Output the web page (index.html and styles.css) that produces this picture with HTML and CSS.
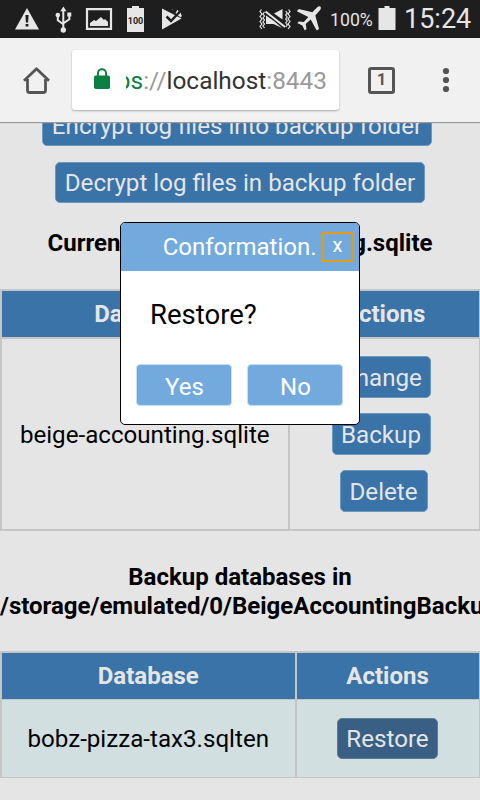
FILE: index.html
```html
<!DOCTYPE html>
<html lang="en">
<head>
<meta charset="utf-8">
<title>Database backup</title>
<link rel="stylesheet" href="styles.css">
</head>
<body>
<div class="phone">
  <div class="status">
    <svg class="status-left" width="200" height="38" viewBox="0 0 200 38" fill="#e6e6e6">
      <path d="M27 8 39 29.500H15z"/><path d="M25.400 15h3.200l-.5 7.500h-2.200zM25.600 24h2.800v2.600h-2.800z" fill="#1e1e1e"/>
      <path d="M63.400 6.500 60.300 11.300h6.200z"/><circle cx="63.300" cy="30" r="2.700"/><circle cx="57.800" cy="15" r="2.300"/><path d="M67.300 12.500h4v4h-4z"/>
      <path d="M63.300 9v20M57.800 15v5.200l5.500 4M69.300 15v4.300l-6 4" fill="none" stroke="#e6e6e6" stroke-width="2"/>
      <path d="M87 9.200h24v19.600H87z" fill="none" stroke="#e6e6e6" stroke-width="2.200"/><path d="M90 26v-3l4-3 2 1 5-4 3 3 1-1 3 3v4z"/>
      <path d="M132 6h7v2h5v24h-17V8h5z"/><text x="135.500" y="23.500" text-anchor="middle" class="batt-num">100</text>
      <path d="M162 8.500 181.500 18.500 162 29.500z"/><path d="M172 8.500 177.500 10 182.500 14 181 17.500 176.500 14.500z"/><path d="m166.500 16.500 4.500 4.500 9-9.500" fill="none" stroke="#1e1e1e" stroke-width="2.500"/><path d="M172 8h12v5l-2.500 2.500-1-3-3-3-2.500 4.500z" fill="#1e1e1e"/>
    </svg>
    <div class="status-right">
      <svg width="66" height="38" viewBox="258 0 66 38" fill="#e6e6e6">
        <path d="m261.500 9.500-1.500 2 2 2.500-2 2.500 2 2.500-2 2.500 2 2.500-2 2.500 2 2.500M264.500 12l-1.500 2 1.500 2-1.500 2 1.500 2-1.500 2 1.500 2-1.500 2 1.500 2M285.700 11l1.500 2-1.500 2 1.500 2-1.500 2 1.500 2-1.500 2 1.500 2-1.500 2M288.500 9.500l1.500 2-2 2.500 2 2.500-2 2.500 2 2.500-2 2.500 2 2.500-2 2.500" fill="none" stroke="#e6e6e6" stroke-width="1.200"/>
        <path d="M266 15.500 274 21 282 28 273.500 24H266zM274 13.500 282.500 9v10.500z"/>
        <path d="m266 11.500 19 14.500" stroke="#1e1e1e" stroke-width="4.500"/><path d="m265.500 11.500 19.500 15.500" stroke="#e6e6e6" stroke-width="2"/>
        <path d="M317.500 7c2.500-1.800 4.500.2 2.800 2.800l-5 5.600 3.700 13.500-2.300 1.500-6-11-5 4.500.8 5-1.700 1.500-2.500-4.800-5-2.500 1.500-1.700 5 .6 4.500-5-11.500-5.800 2-2.200 13.500 3.200z"/>
      </svg>
      <span class="percent">100%</span>
      <svg class="battery" width="18" height="38" viewBox="0 0 18 38" fill="#e6e6e6"><path d="M6.500 6h5v2H17.500v22H.5V8h6z"/></svg>
      <span class="clock">15:24</span>
    </div>
  </div>
  <div class="toolbar">
    <svg class="home" width="30" height="30" viewBox="22 65 30 30" fill="none" stroke="#555" stroke-width="2.800" stroke-linejoin="round"><path d="M24 80.800 36.500 68.800 49 80.800M27.500 79v11.500q0 2 2 2h14q2 0 2-2V79"/></svg>
    <div class="address">
      <svg class="lock" width="16" height="22" viewBox="0 0 16 22"><path d="M3.900 9V5.300a4.100 4.100 0 0 1 8.200 0V9" fill="none" stroke="#0b8043" stroke-width="2"/><rect y="7.500" width="16" height="13.500" rx="1.800" fill="#0b8043"/></svg>
      <div class="url"><span class="url-text"><span class="scheme">https</span><span class="dim">://</span>localhost<span class="dim">:8443</span></span></div>
    </div>
    <div class="tabs">1</div>
    <svg class="dots" width="8" height="26" viewBox="0 0 8 26" fill="#555"><circle cx="4" cy="4" r="3.100"/><circle cx="4" cy="13" r="3.100"/><circle cx="4" cy="22" r="3.100"/></svg>
  </div>
  <main class="page">
    <button class="btn encrypt">Encrypt log files into backup folder</button>
    <button class="btn decrypt">Decrypt log files in backup folder</button>
    <h3 class="current"><span>Current database: </span><span>beige-accounting.sqlite</span></h3>
    <div class="table current-table">
      <div class="th">Database</div><div class="th">Actions</div>
      <div class="td">beige-accounting.sqlite</div>
      <div class="td actions"><button class="btn wide">Change</button><button class="btn wide">Backup</button><button class="btn delete">Delete</button></div>
    </div>
    <h3 class="backups"><span class="backup-title">Backup databases in</span><span class="backup-path">/storage/emulated/0/BeigeAccountingBackup</span></h3>
    <div class="table backup-table">
      <div class="th">Database</div><div class="th">Actions</div>
      <div class="td">bobz-pizza-tax3.sqlten</div>
      <div class="td"><button class="btn restore">Restore</button></div>
    </div>
  </main>
  <div class="dialog">
    <div class="dialog-head"><span>Conformation.</span><button class="close">x</button></div>
    <div class="message">Restore?</div>
    <div class="choices"><button>Yes</button><button>No</button></div>
  </div>
</div>
</body>
</html>
```
FILE: styles.css
```css
* { box-sizing: border-box; }
body { margin: 0; font-family: Roboto, sans-serif; font-size: 24px; line-height: 29px; color: #000; }
button { font: inherit; border: 0; padding: 0; white-space: nowrap; }
svg { display: block; flex: none; }
.phone { position: relative; width: 480px; height: 800px; overflow: hidden; background: #e5e5e5; display: flex; flex-direction: column; }
.status { height: 38px; flex: none; background: #1e1e1e; color: #e6e6e6; display: flex; justify-content: space-between; }
.batt-num { font: bold 9px Roboto, sans-serif; fill: #1e1e1e; }
.status-right { display: flex; align-items: center; padding-right: 9px; }
.percent { width: 43px; margin-left: 6px; margin-right: 5px; font-size: 17.700px; white-space: nowrap; padding-top: 2px; }
.clock { margin-left: 9px; width: 66px; font-size: 27px; white-space: nowrap; margin-top: 1px; text-indent: -1px; }
.toolbar { height: 84px; flex: none; background: #f1f1f1; display: flex; align-items: center; padding: 0 30px 0 22px; position: relative; box-shadow: 0 1px 1px #999; z-index: 1; }
.address { width: 267px; height: 60px; margin-left: 20px; border-radius: 3px; background: #fff; box-shadow: 0 1px 2px #aaa; display: flex; align-items: center; padding-left: 22px; }
.lock { margin-top: -3px; }
.url { margin-left: 16px; width: 201px; overflow: hidden; display: flex; justify-content: flex-end; color: #333; white-space: nowrap; font-size: 24.400px; }
.scheme { color: #0b8043; }
.dim { color: #999; }
.tabs { width: 27px; height: 27px; margin-left: 29px; border: 3px solid #555; border-radius: 3px; color: #555; font: bold 16px/20px Roboto, sans-serif; text-align: center; }
.dots { margin-left: auto; }
.page { display: flex; flex-direction: column; align-items: center; margin-top: -17px; }
.btn { height: 42px; flex: none; border: 1px solid #6c99bf; border-radius: 5px; background: #3973a8; color: #e5e5e5; font-size: 24.150px; padding-top: 2px; }
.encrypt { width: 390px; height: 41px; margin-right: 6px; padding-top: 2px; }
.decrypt { width: 370px; height: 41px; margin-top: 16px; }
h3 { margin: 0; font-size: 24px; line-height: 29px; font-weight: 700; white-space: nowrap; }
.current { width: 385px; margin-top: 26px; display: flex; justify-content: space-between; }
.current span:first-child { width: 72px; overflow: hidden; }
.table { width: 480px; display: grid; gap: 1.500px; padding: 1.500px; background: #c5c5c5; flex: none; }
.current-table { margin-top: 31px; height: 241.500px; grid-template-columns: 286.500px 1fr; grid-template-rows: 46.500px 1fr; }
.backup-table { margin-top: 30px; height: 127px; grid-template-columns: 293.500px 1fr; grid-template-rows: 46px 1fr; }
.th { display: flex; align-items: center; justify-content: center; background: #3973a8; color: #e5e5e5; font-weight: 700; padding-top: 1px; }
.td { display: flex; align-items: center; justify-content: center; background: #e5e5e5; font-size: 24.150px; padding-top: 3px; }
.backup-table .td { background: #d2dfe0; }
.backup-table .td:last-child { padding-top: 1px; }
.current-table .actions { flex-direction: column; gap: 15px; padding: 1px 6px 0 0; }
.wide { width: 99px; }
.delete { width: 88px; margin-left: 5px; }
.backups { width: 480px; margin-top: 32.500px; display: flex; flex-direction: column; }
.backup-title { text-align: center; }
.restore { width: 101px; height: 41px; background: #396084; border-color: #5a7d98; }
.dialog { position: absolute; z-index: 2; left: 120px; top: 222px; width: 240px; height: 203px; border: 1.500px solid #000; border-radius: 5px; background: #fff; overflow: hidden; }
.dialog-head { height: 48px; background: #73aade; color: #fff; display: flex; align-items: center; justify-content: flex-end; padding-right: 5.500px; }
.close { width: 32px; height: 30px; margin-left: 5px; border: 2px solid #e69b13; background: #73aade; color: #fff; font-size: 20px; line-height: 20px; padding-bottom: 4px; }
.message { margin: 28px 0 0 29px; font-size: 27.500px; line-height: 32px; }
.choices { display: flex; gap: 15px; margin: 33px 0 0 15px; }
.choices button { width: 96px; height: 42px; border: 1px solid #c7def3; border-radius: 4px; background: #73aade; color: #fff; padding: 4px 0 0 1px; }
```
